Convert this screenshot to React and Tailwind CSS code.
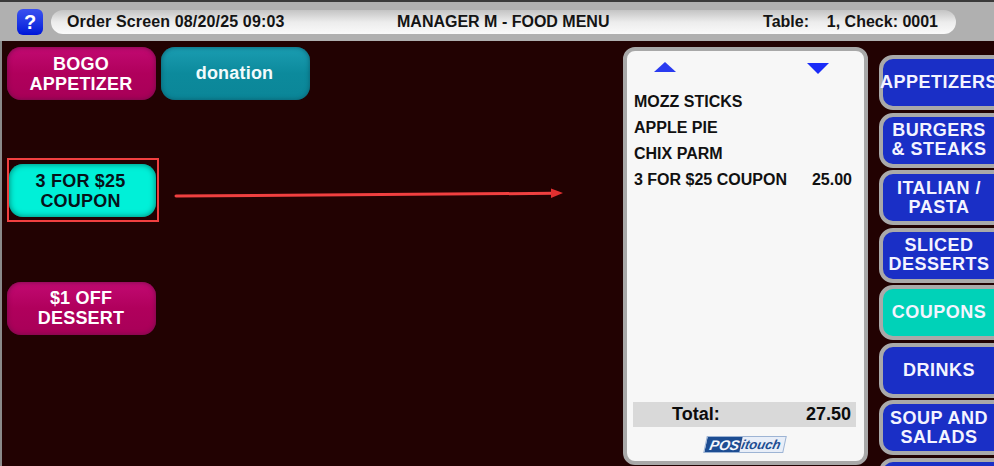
const FONT = "font-['Liberation_Sans',Arial,sans-serif]";

function MenuButton({ lines, tone = "pink", className = "" }) {
  const tones = {
    pink: "bg-gradient-to-b from-[#c20a72] via-[#b0005c] to-[#a80058] text-white shadow-[inset_0_0_5px_#6e0c48]",
    teal: "bg-gradient-to-b from-[#1a9db2] via-[#0c8a9c] to-[#0b8698] text-[#f2fbfc] shadow-[inset_0_0_5px_#0a5c6c]",
    aqua: "bg-[#00f0d8] text-[#06121a] shadow-[inset_0_0_6px_#007868]",
  };
  return (
    <div
      className={`w-[149px] h-[53px] rounded-[14px] flex flex-col items-center justify-center text-[18px] leading-[20px] font-bold tracking-[0.2px] ${tones[tone]} ${className}`}
    >
      {lines.map((l) => (
        <span key={l}>{l}</span>
      ))}
    </div>
  );
}

function CategoryButton({ lines, active }) {
  return (
    <div
      className={`w-[130px] h-[55px] shrink-0 rounded-[14px] border-[4px] border-[#a9a9a9] flex flex-col items-center justify-center text-[18px] leading-[19px] font-bold tracking-[0.5px] text-[#f4f4ff] whitespace-nowrap pr-[10px] ${
        active ? "bg-[#00d2b8]" : "bg-[#1a2fc6]"
      }`}
    >
      {lines.map((l) => (
        <span key={l}>{l}</span>
      ))}
    </div>
  );
}

function OrderLine({ name, price }) {
  return (
    <div className="h-[26px] flex items-center justify-between pr-[4px] text-[#111]">
      <span>{name}</span>
      {price && <span>{price}</span>}
    </div>
  );
}

export default function App() {
  return (
    <div className={`${FONT} relative w-[994px] h-[466px] overflow-hidden bg-[#220202] flex flex-col`}>
      {/* title bar */}
      <header className="h-[41px] shrink-0 bg-[#b0b0b0] border-t-[2px] border-[#3a3a3a] flex items-center pl-[17px] pr-[38px] gap-[8px]">
        <div className="w-[26px] h-[26px] rounded-[6px] bg-gradient-to-b from-[#3a50f0] to-[#0012d8] flex items-center justify-center text-white text-[20px] font-bold leading-none">
          ?
        </div>
        <div className="flex-1 h-[24px] rounded-full bg-gradient-to-b from-[#c4c4c4] via-[#ececec] to-[#fafafa] flex items-center pl-[16px] pr-[18px] text-[16px] font-bold text-[#141414]">
          <span className="w-[330px] tracking-[0.15px]">Order Screen 08/20/25 09:03</span>
          <span className="flex-1">MANAGER M - FOOD MENU</span>
          <span className="whitespace-pre">Table:    1, Check: 0001</span>
        </div>
      </header>

      <main className="flex-1 flex border-l-[2px] border-[#8a8a8a]">
        {/* item buttons */}
        <section className="w-[621px] shrink-0 pl-[5px] pt-[6px] flex flex-col">
          <div className="flex gap-[5px]">
            <MenuButton lines={["BOGO", "APPETIZER"]} className="pr-[1px]" />
            <MenuButton lines={["donation"]} tone="teal" className="pb-[1px] pr-[2px]" />
          </div>
          <div className="mt-[58px] w-[152px] h-[64px] border-[2px] border-[#f04040] flex items-center justify-end pr-[1px]">
            <MenuButton lines={["3 FOR $25", "COUPON"]} tone="aqua" className="w-[147px] pt-[2px] pr-[4px]" />
          </div>
          <MenuButton lines={["$1 OFF", "DESSERT"]} className="mt-[60px] pb-[1px] pr-[1px]" />
        </section>

        {/* order receipt */}
        <section className="w-[245px] h-[418px] mt-[6px] shrink-0 rounded-[12px] border-[4px] border-[#a8a8a8] bg-[#f7f7f7] flex flex-col pl-[7px] pr-[8px] pt-[9px] text-[16px] font-bold">
          <div className="h-[18px] flex items-start justify-between pl-[20px] pr-[27px]">
            <svg className="mt-[2px]" width="22" height="10" viewBox="0 0 22 10">
              <path d="M11 0 L22 10 L0 10 Z" fill="#2a3bf0" />
            </svg>
            <svg className="mt-[3px]" width="22" height="11" viewBox="0 0 22 11">
              <path d="M0 0 L22 0 L11 11 Z" fill="#1a2cf8" />
            </svg>
          </div>
          <div className="mt-[11px] flex-1 flex flex-col">
            <OrderLine name="MOZZ STICKS" />
            <OrderLine name="APPLE PIE" />
            <OrderLine name="CHIX PARM" />
            <OrderLine name="3 FOR $25 COUPON" price="25.00" />
          </div>
          <div className="h-[25px] -ml-[1px] bg-[#d9d9d9] flex items-center justify-between pl-[39px] pr-[5px] text-[18px] text-[#0c0c0c]">
            <span>Total:</span>
            <span>27.50</span>
          </div>
          <div className="h-[34px] flex items-start justify-center pt-[9px]">
            <div className="w-[80px] h-[17px] -skew-x-12 border border-[#9db4d4] bg-[#e8eef8] flex items-center overflow-hidden italic font-bold leading-none">
              <span className="bg-[#1d4d92] text-[#f4f7fc] text-[14px] h-full pl-[4px] pr-[1px] flex items-center">POS</span>
              <span className="text-[#1d4d92] text-[13px] pl-[1px]">itouch</span>
            </div>
          </div>
        </section>

        {/* category buttons */}
        <nav className="ml-[11px] pt-[14px] flex flex-col gap-[2.5px]">
          <CategoryButton lines={["APPETIZERS"]} />
          <CategoryButton lines={["BURGERS", "& STEAKS"]} />
          <CategoryButton lines={["ITALIAN /", "PASTA"]} />
          <CategoryButton lines={["SLICED", "DESSERTS"]} />
          <CategoryButton lines={["COUPONS"]} active />
          <CategoryButton lines={["DRINKS"]} />
          <CategoryButton lines={["SOUP AND", "SALADS"]} />
          <CategoryButton lines={[""]} />
        </nav>
      </main>

      {/* annotation arrow */}
      <svg className="absolute left-[170px] top-[184px]" width="400" height="20" viewBox="0 0 400 20">
        <path d="M6 12 L384 9.3" stroke="#f04040" strokeWidth="3" strokeLinecap="round" />
        <path d="M381 4.5 L393 9 L381 14 Z" fill="#e03030" />
      </svg>
    </div>
  );
}
